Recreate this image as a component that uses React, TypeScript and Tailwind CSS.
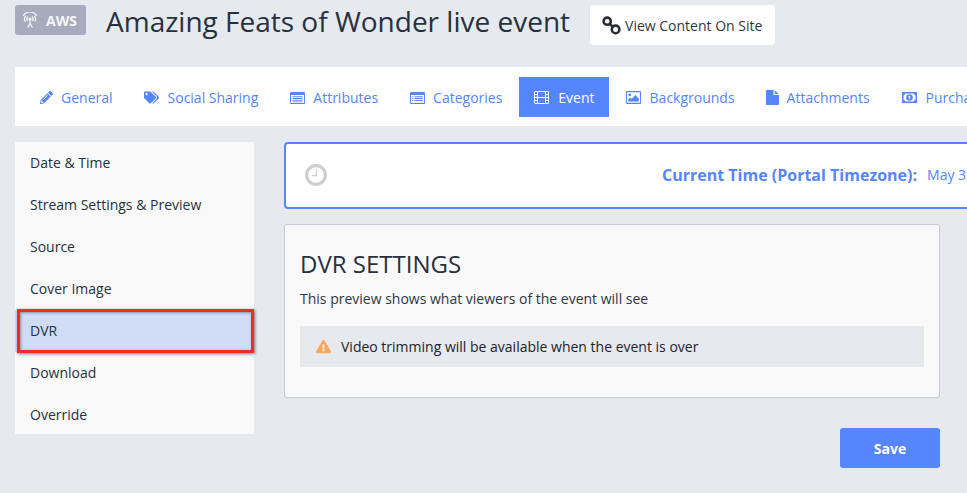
import React from 'react';
import { FaPencilAlt, FaTags, FaExclamationTriangle } from 'react-icons/fa';

const AttributesIcon = () => (
  <svg width="15" height="12" viewBox="0 0 15 12" fill="currentColor">
    <path d="M1 0h13a1 1 0 0 1 1 1v10a1 1 0 0 1-1 1H1a1 1 0 0 1-1-1V1a1 1 0 0 1 1-1zm0 3v8h13V3H1z" fillRule="evenodd" />
    <path d="M2.5 4.2h10v1h-10zM2.5 6h10v1h-10zM2.5 7.8h10v1h-10zM2.5 9.4h10v.9h-10z" />
  </svg>
);

const CategoriesIcon = () => (
  <svg width="15" height="12" viewBox="0 0 15 12" fill="currentColor">
    <path d="M1 0h13a1 1 0 0 1 1 1v10a1 1 0 0 1-1 1H1a1 1 0 0 1-1-1V1a1 1 0 0 1 1-1zm0 3v8h13V3H1z" fillRule="evenodd" />
    <path d="M2.2 4.2h1.2v1H2.2zM4.5 4.2h8.3v1H4.5zM2.2 6h1.2v1H2.2zM4.5 6h8.3v1H4.5zM2.2 7.9h1.2v1H2.2zM4.5 7.9h8.3v1H4.5z" />
  </svg>
);

const FilmIcon = () => (
  <svg width="15" height="13" viewBox="0 0 15 13" fill="none" stroke="currentColor" strokeWidth="1">
    <rect x="0.5" y="0.5" width="14" height="12" rx="0.5" />
    <path d="M3.5 0.5v12M11.5 0.5v12M3.5 6.5h8M0.5 3.5h3M0.5 6.5h3M0.5 9.5h3M11.5 3.5h3M11.5 6.5h3M11.5 9.5h3" />
  </svg>
);

const ImageIcon = () => (
  <svg width="15" height="13" viewBox="0 0 15 13" fill="currentColor">
    <path d="M1 0h13a1 1 0 0 1 1 1v11a1 1 0 0 1-1 1H1a1 1 0 0 1-1-1V1a1 1 0 0 1 1-1zm0 1.2v10.6h13V1.2H1z" fillRule="evenodd" />
    <circle cx="3.8" cy="3.8" r="1.4" />
    <path d="M2.2 10.5V8.6l2-2 1.4 1.4L9.4 4l3.4 3.4v3.1z" />
  </svg>
);

const FileIcon = () => (
  <svg width="13" height="15" viewBox="0 0 13 15" fill="currentColor">
    <path d="M0.8 0H7.5v5h5.5v9.2a.8.8 0 0 1-.8.8H.8a.8.8 0 0 1-.8-.8V.8A.8.8 0 0 1 .8 0z" />
    <path d="M8.6 0.2L12.8 3.9H8.6z" />
  </svg>
);

const MoneyIcon = () => (
  <svg width="15" height="11" viewBox="0 0 15 11" fill="currentColor">
    <path d="M.6 0h13.8a.6.6 0 0 1 .6.6v9.8a.6.6 0 0 1-.6.6H.6a.6.6 0 0 1-.6-.6V.6A.6.6 0 0 1 .6 0zm2.6 1.5c0 1-.8 1.7-1.7 1.7v4.6c.9 0 1.7.8 1.7 1.7h8.6c0-.9.8-1.7 1.7-1.7V3.2c-.9 0-1.7-.7-1.7-1.7H3.2z" fillRule="evenodd" />
    <path d="M7.5 2.2a3.3 3.3 0 1 1 0 6.6 3.3 3.3 0 0 1 0-6.6zM6.4 4.4v.8h.7v2h1V3.7h-.8l-.9.7z" fillRule="evenodd" />
  </svg>
);

const ChainIcon = () => (
  <svg width="19" height="19" viewBox="0 0 19 19" fill="none" stroke="currentColor" strokeWidth="2.6">
    <circle cx="5.2" cy="5.2" r="3.6" />
    <circle cx="13.6" cy="13.4" r="3.8" />
    <path d="M7.6 8l4 3.4" />
  </svg>
);

const ClockIcon = () => (
  <svg width="22" height="22" viewBox="0 0 22 22" fill="none" stroke="currentColor">
    <circle cx="11" cy="11" r="9.4" strokeWidth="3.2" />
    <path d="M11.5 5.5v6H7" strokeWidth="1.4" />
  </svg>
);

const LiveIcon = () => (
  <svg width="16" height="16" viewBox="0 0 16 16" fill="none" stroke="currentColor" strokeWidth="1.25" strokeLinecap="round">
    <circle cx="8" cy="7" r="1.5" fill="currentColor" stroke="none" />
    <path d="M5.4 8.5a3.2 3.2 0 0 1 .1-3.6M10.5 4.9a3.2 3.2 0 0 1 .1 3.6" />
    <path d="M3 9.3a5.6 5.6 0 0 1 .3-5.2M12.7 4.1a5.6 5.6 0 0 1 .3 5.2" />
    <path d="M1.5 3.4a7.8 7.8 0 0 1 13 0" />
    <path d="M8 8.5v3M8 11.5l-2.2 3.7M8 11.5l2.2 3.7" />
  </svg>
);

const tabs = [
  { icon: <FaPencilAlt size={13} />, label: 'General', cls: 'gap-[8px] px-[15px]' },
  { icon: <FaTags size={15} />, label: 'Social Sharing', cls: 'gap-[9px] px-[15px]' },
  { icon: <AttributesIcon />, label: 'Attributes', cls: 'ml-[1px] gap-[8px] px-[15px]' },
  { icon: <CategoriesIcon />, label: 'Categories', cls: 'ml-[1px] gap-[8px] px-[15px]' },
  { icon: <FilmIcon />, label: 'Event', cls: 'ml-[1px] gap-[9px] pr-[14px] pl-[15px] bg-[#5585ff] text-white' },
  { icon: <ImageIcon />, label: 'Backgrounds', cls: 'ml-[1px] gap-[9px] px-[15px]' },
  { icon: <FileIcon />, label: 'Attachments', cls: 'gap-[8px] px-[15px]' },
  { icon: <MoneyIcon />, label: 'Purchase', cls: 'ml-[1px] gap-[9px] px-[15px]' },
];

const sideItems = ['Date & Time', 'Stream Settings & Preview', 'Source', 'Cover Image', 'DVR', 'Download', 'Override'];

export default function App() {
  return (
    <div className="h-screen w-screen overflow-hidden bg-[#e6e9ee] font-['Open_Sans',sans-serif] text-[14px] text-[#263140]">
      <header className="flex items-start pl-[15px] pt-[5px]">
        <div className="flex h-[30px] w-[71px] items-center gap-[8px] rounded-[3px] bg-[#a8abbd] pl-[7px] text-white/90">
          <LiveIcon />
          <span className="text-[14px] font-bold">AWS</span>
        </div>
        <h1 className="ml-[20px] h-[40px] text-[28px] leading-[32px] whitespace-nowrap text-[#263140]">
          Amazing Feats of Wonder live event
        </h1>
        <button className="ml-[20px] flex h-[40px] w-[185px] items-center gap-[4px] rounded-[3px] bg-white pl-[12px] text-[14px] text-[#2f3742]">
          <span className="text-[#2a2f36]">
            <ChainIcon />
          </span>
          View Content On Site
        </button>
      </header>

      <nav className="mt-[22px] ml-[15px] flex h-[59px] w-[1100px] items-center gap-[1px] bg-white pl-[10px] text-[#5585ff]">
        {tabs.map((tab) => (
          <div key={tab.label} className={`flex h-[40px] items-center pt-[2px] whitespace-nowrap ${tab.cls}`}>
            {tab.icon}
            {tab.label}
          </div>
        ))}
      </nav>

      <div className="mt-[16px] flex items-start pl-[15px]">
        <ul className="w-[239px] shrink-0 bg-[#f9f9f9]">
          {sideItems.map((item, i) => (
            <li
              key={item}
              className={`relative flex items-center pl-[15px] ${i === sideItems.length - 1 ? 'h-[40px]' : 'h-[42px] pb-[2px]'} ${item === 'DVR' ? 'bg-[#d0dcf5]' : ''}`}
            >
              {item}
              {item === 'DVR' && (
                <span className="absolute top-[-1px] right-[0px] bottom-[-1px] left-[2px] border-[3px] border-[#ee2b24] shadow-[1px_1px_3px_rgba(0,0,0,0.5),inset_1px_1px_3px_rgba(0,0,0,0.35)]" />
              )}
            </li>
          ))}
        </ul>

        <main className="ml-[30px] w-[656px] shrink-0">
          <div className="flex h-[67px] w-[800px] items-center rounded-[4px] border-2 border-[#5585ff] bg-white pb-[2px] pl-[19px] text-[#5585ff]">
            <span className="text-[#cfcfcf]">
              <ClockIcon />
            </span>
            <strong className="ml-[335px] text-[16px] font-bold">Current Time (Portal Timezone):</strong>
            <span className="ml-[10px]">May 3</span>
          </div>

          <section className="mt-[15px] h-[174px] rounded-[3px] border border-[#c6cad3] bg-[#f9f9f9] px-[15px] pt-[23px]">
            <h2 className="text-[24px] leading-[32px] text-[#263140]">DVR SETTINGS</h2>
            <p className="mt-[9px] leading-[20px] text-[#2f3742]">This preview shows what viewers of the event will see</p>
            <div className="mt-[17px] flex h-[41px] items-center gap-[10px] bg-[#e6e9ee] pl-[16px] text-[#1d232b]">
              <FaExclamationTriangle size={15} className="text-[#ffa858]" />
              Video trimming will be available when the event is over
            </div>
          </section>

          <div className="mt-[30px] flex justify-end">
            <button className="h-[40px] w-[100px] rounded-[3px] bg-[#5585ff] text-[14px] font-bold text-white">Save</button>
          </div>
        </main>
      </div>
    </div>
  );
}
